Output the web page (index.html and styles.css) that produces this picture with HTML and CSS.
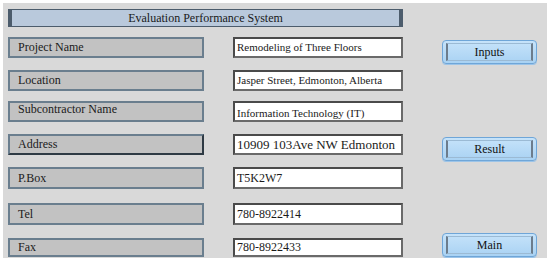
FILE: index.html
```html
<!DOCTYPE html>
<html lang="en">
  <head>
    <meta charset="UTF-8" />
    <meta name="viewport" content="width=device-width, initial-scale=1.0" />
    <title>Evaluation Performance System</title>
    <link rel="stylesheet" href="styles.css">
  </head>
  <body>
    <div class="panel">
      <div class="titlebar">Evaluation Performance System</div>
      <div class="content">
        <div class="fields">
          <div class="row">
            <div class="caption">Project Name</div>
            <div class="value small">Remodeling of Three Floors</div>
          </div>
          <div class="row">
            <div class="caption">Location</div>
            <div class="value small">Jasper Street, Edmonton, Alberta</div>
          </div>
          <div class="row">
            <div class="caption caption-top">Subcontractor Name</div>
            <div class="value small value-low">Information Technology (IT)</div>
          </div>
          <div class="row">
            <div class="caption sunken">Address</div>
            <div class="value large">10909 103Ave NW Edmonton</div>
          </div>
          <div class="row tall">
            <div class="caption">P.Box</div>
            <div class="value">T5K2W7</div>
          </div>
          <div class="row tall">
            <div class="caption">Tel</div>
            <div class="value">780-8922414</div>
          </div>
          <div class="row short">
            <div class="caption">Fax</div>
            <div class="value">780-8922433</div>
          </div>
        </div>
        <div class="actions">
          <button class="btn"><span>Inputs</span></button>
          <button class="btn"><span>Result</span></button>
          <button class="btn"><span>Main</span></button>
        </div>
      </div>
    </div>
  </body>
</html>
```

FILE: styles.css
```css
body {
  margin: 0;
  background-color: #ffffff;
  font-family: "Liberation Serif", "Times New Roman", serif;
  font-size: 12px;
  color: #1a1a1a;
}
.panel {
  margin: 3px;
  width: 544px;
  height: 255px;
  box-sizing: border-box;
  padding: 6px 5px 0 5px;
  background-color: #d9d9d9;
}
.titlebar {
  width: 395px;
  height: 18px;
  box-sizing: border-box;
  border: 1px solid #4c5c6c;
  border-left: 4px solid #4c5c6c;
  border-right: 4px solid #4c5c6c;
  box-shadow: inset 1px 0 0 #b9c9dc, inset -1px 0 0 #b9c9dc;
  background-color: #b9c9dc;
  text-align: center;
  line-height: 16px;
}
.content {
  display: flex;
  margin-top: 10px;
}
/* rows are not evenly spaced in the original form */
.fields {
  display: grid;
  grid-template-rows: 33px 31px 33px 33px 36px 35px 19px;
  width: 395px;
}
.row {
  display: flex;
  justify-content: space-between;
  align-items: flex-start;
}
.row > div {
  height: 21px;
}
.row.tall > div {
  height: 22px;
}
.row.short > div {
  height: 19px;
}
.caption {
  width: 196px;
  box-sizing: border-box;
  padding-left: 8px;
  border: 2px solid #6a7e8e;
  background-color: #c2c2c2;
  line-height: 17px;
}
.row.tall .caption {
  line-height: 18px;
}
.row.short .caption {
  line-height: 15px;
}
.caption-top {
  line-height: 13px !important;
}
.caption.sunken {
  border-right-color: #2e3a44;
  border-bottom-color: #2e3a44;
}
.value {
  width: 170px;
  box-sizing: border-box;
  padding-left: 2px;
  border: 2px solid #4a4a4a;
  border-right-color: #6a6a6a;
  border-bottom-color: #6a6a6a;
  background-color: #ffffff;
  line-height: 17px;
  white-space: nowrap;
  overflow: hidden;
}
.row.tall .value {
  line-height: 18px;
}
.row.short .value {
  line-height: 15px;
}
.value.small {
  font-size: 11px;
}
.value.large {
  font-size: 13px;
}
.value-low {
  line-height: 21px;
}
.actions {
  display: flex;
  flex-direction: column;
  justify-content: space-between;
  margin-left: 39px;
  padding: 3px 0 0 0;
  width: 95px;
}
.btn {
  height: 24px;
  padding: 2px 3px;
  border: 1px solid #6fa6d8;
  border-radius: 4px;
  background: linear-gradient(#c6e3fa, #a9d2f3);
  box-shadow: 0 1px 0 #9cc4e8;
  font-family: "Liberation Serif", "Times New Roman", serif;
  font-size: 12px;
  color: #111111;
  cursor: pointer;
}
.btn span {
  display: block;
  height: 100%;
  box-sizing: border-box;
  border-left: 2px solid #6c7c8c;
  border-right: 2px solid #6c7c8c;
  border-top: 1px solid #9bbad4;
  border-bottom: 1px solid #9bbad4;
  line-height: 16px;
}
```
